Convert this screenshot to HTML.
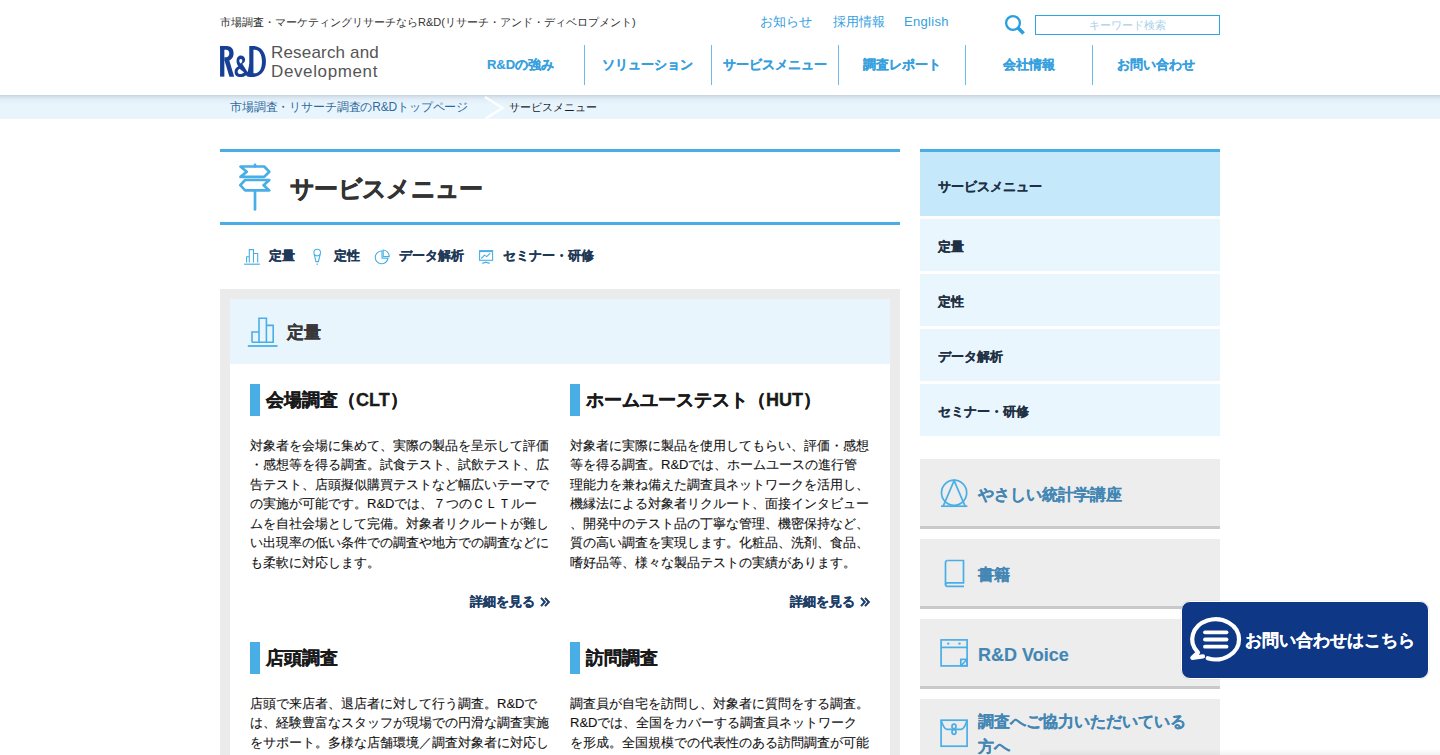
<!DOCTYPE html>
<html lang="ja">
<head>
<meta charset="utf-8">
<style>
*{margin:0;padding:0;box-sizing:border-box}
html,body{width:1440px;height:755px;overflow:hidden;background:#fff}
body{font-family:"Liberation Sans",sans-serif;color:#333;position:relative}
.abs{position:absolute;white-space:nowrap}
#hdr{position:absolute;left:0;top:0;width:1440px;height:95px;background:#fff;z-index:2}
#bc{position:absolute;left:0;top:95px;width:1440px;height:24px;background:linear-gradient(#c6d3dd 0px,#d6e3ec 2px,#e3eff8 5px,#e9f5fd 10px,#e9f5fd 23px,#eef7fd 24px)}
.tag{left:220px;top:15px;font-size:11px;color:#333;line-height:14px}
.toplink{top:14px;font-size:13px;color:#35a0df;line-height:16px}
#search{position:absolute;left:1035px;top:15px;width:185px;height:20px;border:1px solid #2ba6e1;font-size:11px;color:#a9cfe9;text-align:center;line-height:18px}
.nav{position:absolute;top:45px;height:40px;width:127px;text-align:center;font-size:13px;font-weight:bold;color:#36a0de;line-height:40px;-webkit-text-stroke:0.15px #36a0de}
.sep{position:absolute;top:45px;width:1px;height:40px;background:#6dbbe8}
.logotext{left:271px;font-size:17px;color:#555;line-height:18px;letter-spacing:0}
/* title */
#ttl{position:absolute;left:220px;top:149px;width:680px;height:76px;border-top:3px solid #4aaee6;border-bottom:3px solid #4aaee6}
#ttl h1{position:absolute;left:70px;top:22px;font-size:24px;line-height:30px;font-weight:bold;color:#333;white-space:nowrap;letter-spacing:-0.7px;-webkit-text-stroke:0.5px #333}
.tab{position:absolute;top:248px;font-size:13px;font-weight:bold;color:#1e3858;line-height:16px;white-space:nowrap;-webkit-text-stroke:0.15px #1e3858}
#gray{position:absolute;left:220px;top:289px;width:680px;height:500px;background:#ebebeb}
#inner{position:absolute;left:230px;top:299px;width:660px;height:500px;background:#fff}
#sechd{position:absolute;left:230px;top:299px;width:660px;height:65px;background:#e8f5fd}
#sechd span{position:absolute;left:57px;top:23px;font-size:17px;font-weight:bold;color:#383838;line-height:22px;-webkit-text-stroke:0.25px #383838}
.ct{position:absolute;height:31.5px;border-left:10px solid #4aaee6;padding-left:6px;font-size:18px;font-weight:bold;color:#1a1a1a;line-height:33px;white-space:nowrap;-webkit-text-stroke:0.35px #1a1a1a}
.cb{position:absolute;width:320px;white-space:nowrap;font-size:13px;line-height:19.5px;color:#111;-webkit-text-stroke:0.1px #111}
.more{position:absolute;font-size:13px;font-weight:bold;color:#1c3d66;-webkit-text-stroke:0.25px #1c3d66;line-height:16px;white-space:nowrap}
/* sidebar */
#sbt{position:absolute;left:920px;top:149px;width:300px;height:67px;border-top:3px solid #4aaee6;background:#c5e8fb}
.sbi{position:absolute;left:920px;width:300px;height:52px;background:#e9f6fd;font-size:13px;font-weight:bold;color:#1f3044;line-height:56px;padding-left:18px;white-space:nowrap;-webkit-text-stroke:0.15px #1f3044}
.bn{position:absolute;left:920px;width:300px;height:70px;background:#ededed;border-bottom:3px solid #c9c9c9}
.bn span{position:absolute;left:58px;font-size:16px;font-weight:bold;color:#4386b4;-webkit-text-stroke:0.12px #4386b4;line-height:24px;white-space:nowrap}
#cta{position:absolute;left:1181px;top:601px;width:248px;height:78px;background:#0e3785;border:1px solid #fff;border-radius:9px;box-shadow:0 0 1px rgba(0,0,0,.3);z-index:5}
#cta span{position:absolute;left:63px;top:27px;font-size:17px;font-weight:bold;color:#fff;-webkit-text-stroke:0.1px #fff;line-height:24px;white-space:nowrap}
</style>
</head>
<body>
<div id="hdr">
  <div class="abs tag">市場調査・マーケティングリサーチならR&amp;D(リサーチ・アンド・ディベロプメント)</div>
  <div class="abs toplink" style="left:760px">お知らせ</div>
  <div class="abs toplink" style="left:833px">採用情報</div>
  <div class="abs toplink" style="left:904px;letter-spacing:0.3px">English</div>
  <svg style="position:absolute;left:1000px;top:10px" width="30" height="30" viewBox="1000 10 30 30"><circle cx="1013" cy="23" r="6.9" fill="none" stroke="#2a9fdf" stroke-width="2.3"/><line x1="1017.6" y1="27.6" x2="1023.6" y2="33.6" stroke="#2a9fdf" stroke-width="3.6"/></svg>
  <div id="search">キーワード検索</div>
  <!-- logo -->
  <svg style="position:absolute;left:215px;top:40px" width="60" height="45" viewBox="0 0 1007 755">
    <g fill="#173f95">
      <rect x="85" y="100" width="72" height="515"/>
      <path d="M85,100 L200,100 C270,100 312,150 312,222 C312,300 262,350 190,352 L157,352 L157,290 L185,290 C220,290 240,262 240,224 C240,186 220,162 185,162 L85,162 Z"/>
      <path d="M160,345 L238,335 L322,615 L242,615 Z"/>
      <path d="M430,262 C478,262 505,295 505,330 C505,362 485,382 458,398 L548,540 L575,405 L625,420 L590,590 L615,615 L548,615 L522,590 C495,612 465,622 430,622 C365,622 328,585 328,535 C328,490 355,462 392,440 C375,415 362,392 362,355 C362,300 392,262 430,262 Z M432,318 C415,318 408,332 408,348 C408,365 418,382 428,396 C448,385 458,370 458,350 C458,332 450,318 432,318 Z M412,482 C390,496 380,512 380,532 C380,558 400,570 425,570 C450,570 470,560 490,545 Z"/>
      <path d="M575,100 L640,100 C775,100 855,210 855,360 C855,515 770,622 612,622 L575,622 Z M645,162 L645,560 L660,560 C745,560 788,480 788,360 C788,240 742,162 665,162 Z"/>
    </g>
  </svg>
  <div class="abs logotext" style="top:44px;letter-spacing:0.18px">Research and</div>
  <div class="abs logotext" style="top:63px;letter-spacing:0.62px">Development</div>
  <div class="nav" style="left:457px">R&amp;Dの強み</div>
  <div class="sep" style="left:584px"></div>
  <div class="nav" style="left:584px">ソリューション</div>
  <div class="sep" style="left:711px"></div>
  <div class="nav" style="left:711px">サービスメニュー</div>
  <div class="sep" style="left:838px"></div>
  <div class="nav" style="left:838px">調査レポート</div>
  <div class="sep" style="left:965px"></div>
  <div class="nav" style="left:965px">会社情報</div>
  <div class="sep" style="left:1092px"></div>
  <div class="nav" style="left:1092px">お問い合わせ</div>
</div>
<div id="bc">
  <div class="abs" style="left:230px;top:4px;font-size:12px;line-height:16px;color:#2f6a9c;letter-spacing:-0.15px">市場調査・リサーチ調査のR&amp;Dトップページ</div>
  <svg style="position:absolute;left:482px;top:0" width="24" height="24" viewBox="0 0 24 24"><polyline points="3,2 20.5,13 3,24" fill="none" stroke="#fff" stroke-width="2.4" opacity="0.9"/></svg>
  <div class="abs" style="left:509px;top:4px;font-size:11px;line-height:16px;color:#1a1a2a">サービスメニュー</div>
</div>

<!-- title -->
<div id="ttl">
  <svg style="position:absolute;left:10px;top:3px" width="50" height="60" viewBox="0 0 50 60">
    <g fill="none" stroke="#4aaee6" stroke-width="2.7" stroke-linejoin="round" stroke-linecap="round">
      <path d="M10.5,11.5 L34.2,11.5 L39.3,16.7 L34.2,21.9 L10.5,21.9 L16.7,16.7 Z"/>
      <path d="M15.1,25 L39.3,25 L33.6,30.2 L39.3,35.4 L15.1,35.4 L10.3,30.2 Z"/>
      <line x1="25" y1="36" x2="25" y2="54.5"/>
      <line x1="25" y1="9.8" x2="25" y2="11.5"/>
    </g>
  </svg>
  <h1>サービスメニュー</h1>
</div>

<!-- tabs -->
<svg style="position:absolute;left:240px;top:244px" width="260" height="24" viewBox="240 244 260 24">
  <g fill="none" stroke="#4aaee6" stroke-width="1.1">
    <path d="M246.6,262.6 L246.6,256.8 L249.3,256.8 M249.3,262.6 L249.3,249.6 L253.5,249.6 L253.5,262.6 M253.5,253.5 L257.7,253.5 L257.7,262.6"/>
    <line x1="244.1" y1="264.2" x2="259.8" y2="264.2" stroke-width="1.2"/>
    <circle cx="317.2" cy="252.6" r="3.3"/>
    <path d="M314.3,254.5 L316,261.6 L318.4,261.6 L320.1,254.5"/>
    <line x1="317.2" y1="263.5" x2="317.2" y2="265"/>
    <path d="M382,251 A6.4,6.4 0 1 0 388,258.3 L382,258.3 Z"/>
    <path d="M383.2,250 A6.4,6.4 0 0 1 389.2,256.6 L383.2,256.6 Z"/>
    <rect x="479.6" y="250.7" width="13" height="9.6"/>
    <line x1="479.6" y1="251.3" x2="492.6" y2="251.3" stroke-width="1.6"/>
    <polyline points="481.3,258.5 484.5,255.1 486.7,256.6 490.2,253.2"/>
    <polyline points="482.3,263.4 485.8,262.1 489.6,263.4" stroke-width="1.2"/>
  </g>
</svg>
<div class="tab" style="left:269px">定量</div>
<div class="tab" style="left:334px">定性</div>
<div class="tab" style="left:399px">データ解析</div>
<div class="tab" style="left:503px">セミナー・研修</div>

<!-- main container -->
<div id="gray"></div>
<div id="inner"></div>
<div id="sechd">
  <svg style="position:absolute;left:0;top:0" width="60" height="65" viewBox="230 299 60 65">
    <g fill="none" stroke="#4aaee6" stroke-width="1.6">
      <path d="M252,342.2 L252,332 L259,332 M259,342.2 L259,318.2 L266.4,318.2 L266.4,342.2 M266.4,325.4 L273.2,325.4 L273.2,342.2 L252,342.2"/>
      <line x1="247.8" y1="346" x2="277.5" y2="346" stroke-width="1.8"/>
    </g>
  </svg>
  <span>定量</span>
</div>

<div class="ct" style="left:250px;top:384px">会場調査（CLT）</div>
<div class="cb" style="left:250px;top:435.5px">対象者を会場に集めて、実際の製品を呈示して評価<br>・感想等を得る調査。試食テスト、試飲テスト、広<br>告テスト、店頭擬似購買テストなど幅広いテーマで<br>の実施が可能です。R&amp;Dでは、７つのＣＬＴルー<br>ムを自社会場として完備。対象者リクルートが難し<br>い出現率の低い条件での調査や地方での調査などに<br>も柔軟に対応します。</div>
<div class="more" style="left:470px;top:594px">詳細を見る<svg style="position:absolute;left:70px;top:3px" width="10" height="10" viewBox="0 0 10 10"><g fill="none" stroke="#1c3d66" stroke-width="2"><polyline points="1,0.8 4.8,5 1,9.2"/><polyline points="5,0.8 8.8,5 5,9.2"/></g></svg></div>

<div class="ct" style="left:570px;top:384px">ホームユーステスト（HUT）</div>
<div class="cb" style="left:570px;top:435.5px">対象者に実際に製品を使用してもらい、評価・感想<br>等を得る調査。R&amp;Dでは、ホームユースの進行管<br>理能力を兼ね備えた調査員ネットワークを活用し、<br>機縁法による対象者リクルート、面接インタビュー<br>、開発中のテスト品の丁寧な管理、機密保持など、<br>質の高い調査を実現します。化粧品、洗剤、食品、<br>嗜好品等、様々な製品テストの実績があります。</div>
<div class="more" style="left:790px;top:594px">詳細を見る<svg style="position:absolute;left:70px;top:3px" width="10" height="10" viewBox="0 0 10 10"><g fill="none" stroke="#1c3d66" stroke-width="2"><polyline points="1,0.8 4.8,5 1,9.2"/><polyline points="5,0.8 8.8,5 5,9.2"/></g></svg></div>

<div class="ct" style="left:250px;top:642px">店頭調査</div>
<div class="cb" style="left:250px;top:693.5px">店頭で来店者、退店者に対して行う調査。R&amp;Dで<br>は、経験豊富なスタッフが現場での円滑な調査実施<br>をサポート。多様な店舗環境／調査対象者に対応し</div>

<div class="ct" style="left:570px;top:642px">訪問調査</div>
<div class="cb" style="left:570px;top:693.5px">調査員が自宅を訪問し、対象者に質問をする調査。<br>R&amp;Dでは、全国をカバーする調査員ネットワーク<br>を形成。全国規模での代表性のある訪問調査が可能</div>

<!-- sidebar -->
<div id="sbt"><div class="abs" style="left:18px;top:27px;font-size:13px;font-weight:bold;color:#1f3044;line-height:16px;-webkit-text-stroke:0.15px #1f3044">サービスメニュー</div></div>
<div class="sbi" style="top:219px">定量</div>
<div class="sbi" style="top:274px">定性</div>
<div class="sbi" style="top:329px">データ解析</div>
<div class="sbi" style="top:384px">セミナー・研修</div>

<div class="bn" style="top:459px"><span style="top:24px">やさしい統計学講座</span></div>
<div class="bn" style="top:539px"><span style="top:24px">書籍</span></div>
<div class="bn" style="top:619px"><span style="top:24px;font-size:18px">R&amp;D Voice</span></div>
<div class="bn" style="top:699px;height:90px"><span style="top:10px;line-height:25px">調査へご協力いただいている<br>方へ</span></div>
<svg style="position:absolute;left:920px;top:440px" width="80" height="315" viewBox="920 440 80 315">
  <g fill="none" stroke="#4aaee6" stroke-width="1.7">
    <circle cx="954.1" cy="492.8" r="12.6"/>
    <polyline points="943.2,506.2 954.1,480.6 965.1,506.2"/>
    <line x1="941" y1="506.2" x2="967.4" y2="506.2"/>
    <path d="M947.5,560.5 L963.5,560.5 L963.5,582.8 L947.5,582.8 Q945.5,582.8 945.5,584.6 Q945.5,586.4 947.5,586.4 L964,586.4"/>
    <path d="M947.5,560.5 Q945.5,560.5 945.5,563 L945.5,584.6"/>
    <rect x="941.1" y="639.9" width="26" height="26"/>
    <line x1="941.1" y1="647.4" x2="967.1" y2="647.4"/>
    <rect x="960.8" y="659.4" width="6.3" height="6.3"/>
    <line x1="961.5" y1="665" x2="966.5" y2="660"/>
    <rect x="941.1" y="720.2" width="26" height="26"/>
    <path d="M941.1,720.2 Q944,729.3 947,729.3 L961.2,729.3 Q964.2,729.3 967.1,720.2"/>
    <ellipse cx="954" cy="726.5" rx="2" ry="2.3"/>
    <ellipse cx="954" cy="732" rx="2" ry="2.3"/>
  </g>
  <circle cx="948.2" cy="643.6" r="1.2" fill="#4aaee6"/><circle cx="959.5" cy="643.6" r="1.2" fill="#4aaee6"/>
</svg>
<!-- CTA -->
<div id="cta">
  <svg style="position:absolute;left:0;top:0" width="66" height="76" viewBox="1182 602 66 76">
    <path d="M1207.7,658.2 A23.4,20.1 0 1 0 1198,652.5 L1192.3,657.8 L1203,656.3" fill="none" stroke="#fff" stroke-width="4.2" stroke-linejoin="round" stroke-linecap="round"/>
    <g stroke="#fff" stroke-width="3.8" stroke-linecap="round"><line x1="1205" y1="632.3" x2="1226.5" y2="632.3"/><line x1="1205" y1="639.5" x2="1226.5" y2="639.5"/><line x1="1205" y1="646.7" x2="1226.5" y2="646.7"/></g>
  </svg>
  <span>お問い合わせはこちら</span>
</div>
<div style="position:absolute;left:1040px;top:749px;width:400px;height:6px;background:linear-gradient(rgba(0,0,0,0),rgba(0,0,0,.05));z-index:4"></div>
</body>
</html>
